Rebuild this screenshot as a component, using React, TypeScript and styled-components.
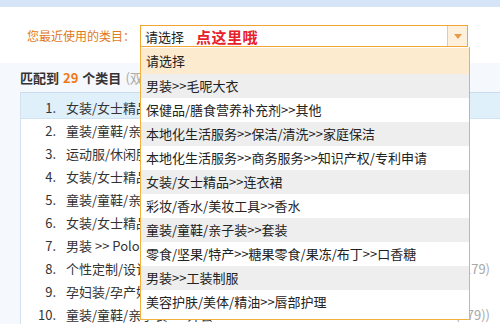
import React from 'react'
import styled, { createGlobalStyle } from 'styled-components'

const GlobalStyle = createGlobalStyle`
  html, body {
    margin: 0;
    padding: 0;
    background: #ffffff;
  }
  body {
    width: 500px;
    height: 324px;
    overflow: hidden;
    font-family: "Noto Sans CJK SC", "Liberation Sans", sans-serif;
    font-size: 13px;
    color: #333;
  }
`

const Page = styled.div`
  position: relative;
  width: 500px;
  height: 324px;
  overflow: hidden;
  display: flex;
  flex-direction: column;
`

const TopBand = styled.div`
  height: 7px;
  background: #d5e4f7;
  flex-shrink: 0;
`

const RecentBar = styled.div`
  height: 56px;
  flex-shrink: 0;
  display: flex;
  align-items: flex-start;
  padding: 18px 0 0 27px;
  box-sizing: border-box;
  background: #fff;
`

const RecentLabel = styled.div`
  width: 113px;
  height: 22px;
  line-height: 22px;
  font-size: 12px;
  color: #e07a1c;
  white-space: nowrap;
`

const SelectWrap = styled.div`
  position: relative;
`

const SelectBox = styled.div`
  width: 328px;
  height: 22px;
  box-sizing: border-box;
  border: 1px solid #f2a535;
  display: flex;
  align-items: center;
  background: #fff;
`

const SelectValue = styled.span`
  padding-left: 4px;
  font-size: 13px;
  color: #222;
`

const Hint = styled.span`
  margin-left: 12px;
  font-size: 15px;
  font-weight: bold;
  color: #e8202a;
  letter-spacing: 0.5px;
`

const ArrowButton = styled.div`
  margin-left: auto;
  width: 19px;
  height: 20px;
  background: #fdf1de;
  border-left: 1px solid #f3c98a;
  display: flex;
  align-items: center;
  justify-content: center;
`

const Menu = styled.div`
  position: absolute;
  left: 0;
  top: 22px;
  width: 330px;
  height: 273px;
  box-sizing: border-box;
  border: 1px solid #f4b13e;
  border-top: none;
  background: #fff;
  padding-top: 1px;
  z-index: 10;
`

const MenuItem = styled.div<{ $tone: 'active' | 'gray' | 'white' }>`
  height: ${(p) => (p.$tone === 'active' ? '26px' : '24px')};
  line-height: ${(p) => (p.$tone === 'active' ? '26px' : '24px')};
  padding-left: 5px;
  font-size: 13px;
  color: #222;
  white-space: nowrap;
  overflow: hidden;
  background: ${(p) =>
    p.$tone === 'active' ? '#fdebcf' : p.$tone === 'gray' ? '#eeeeee' : '#ffffff'};
`

const MatchArea = styled.div`
  flex: 1;
  background: #f5f8fc;
  display: flex;
  flex-direction: column;
`

const MatchHeader = styled.div`
  height: 29px;
  line-height: 30px;
  padding-left: 20px;
  font-size: 13px;
  font-weight: bold;
  color: #333;
  white-space: nowrap;
`

const Count = styled.span`
  color: #f07818;
  margin: 0 4px;
`

const Muted = styled.span`
  font-weight: normal;
  color: #aaa;
  margin-left: 4px;
`

const List = styled.div`
  flex: 1;
  margin-left: 20px;
  background: #fff;
  border-top: 1px solid #c9dcee;
  border-left: 1px solid #d3e2f0;
`

const Row = styled.div<{ $first?: boolean }>`
  height: ${(p) => (p.$first ? '26px' : '23px')};
  line-height: 23px;
  padding-top: ${(p) => (p.$first ? '3px' : '0')};
  box-sizing: border-box;
  display: flex;
  background: ${(p) => (p.$first ? '#e0f0fb' : '#fff')};
  border-bottom: ${(p) => (p.$first ? '1px solid #cfe3f2' : 'none')};
  white-space: nowrap;
  font-size: 13px;
  color: #333;
`

const RowNum = styled.span`
  width: 35px;
  text-align: right;
  flex-shrink: 0;
`

const RowName = styled.span`
  margin-left: 10px;
  overflow: hidden;
`

const RowCount = styled.span`
  margin-left: auto;
  padding-right: 10px;
  color: #a8a8a8;
  flex-shrink: 0;
`

const menuItems = [
  '请选择',
  '男装>>毛呢大衣',
  '保健品/膳食营养补充剂>>其他',
  '本地化生活服务>>保洁/清洗>>家庭保洁',
  '本地化生活服务>>商务服务>>知识产权/专利申请',
  '女装/女士精品>>连衣裙',
  '彩妆/香水/美妆工具>>香水',
  '童装/童鞋/亲子装>>套装',
  '零食/坚果/特产>>糖果零食/果冻/布丁>>口香糖',
  '男装>>工装制服',
  '美容护肤/美体/精油>>唇部护理',
]

const rows: { name: string; count?: string }[] = [
  { name: '女装/女士精品 >> 连衣裙' },
  { name: '童装/童鞋/亲子装 >> 套装' },
  { name: '运动服/休闲服装 >> 运动套装' },
  { name: '女装/女士精品 >> 套装' },
  { name: '童装/童鞋/亲子装 >> 亲子装' },
  { name: '女装/女士精品 >> 毛针织衫' },
  { name: '男装 >> Polo衫' },
  { name: '个性定制/设计服务/DIY >> 其他定制', count: '(3179)' },
  { name: '孕妇装/孕产妇用品 >> 孕妇装' },
  { name: '童装/童鞋/亲子装 >> 外套', count: '(179))' },
]

const App = () => {
  return (
    <>
      <GlobalStyle />
      <Page>
        <TopBand />
        <RecentBar>
          <RecentLabel>您最近使用的类目：</RecentLabel>
          <SelectWrap>
            <SelectBox>
              <SelectValue>请选择</SelectValue>
              <Hint>点这里哦</Hint>
              <ArrowButton>
                <svg width="8" height="5" viewBox="0 0 8 5">
                  <path d="M0 0 L8 0 L4 5 Z" fill="#eb9a4a" />
                </svg>
              </ArrowButton>
            </SelectBox>
            <Menu>
              {menuItems.map((item, i) => (
                <MenuItem key={i} $tone={i === 0 ? 'active' : i % 2 === 1 ? 'gray' : 'white'}>
                  {item}
                </MenuItem>
              ))}
            </Menu>
          </SelectWrap>
        </RecentBar>
        <MatchArea>
          <MatchHeader>
            匹配到<Count>29</Count>个类目<Muted>(双击选择类目)</Muted>
          </MatchHeader>
          <List>
            {rows.map((r, i) => (
              <Row key={i} $first={i === 0}>
                <RowNum>{i + 1}.</RowNum>
                <RowName>{r.name}</RowName>
                {r.count && <RowCount>{r.count}</RowCount>}
              </Row>
            ))}
          </List>
        </MatchArea>
      </Page>
    </>
  )
}

export default App
